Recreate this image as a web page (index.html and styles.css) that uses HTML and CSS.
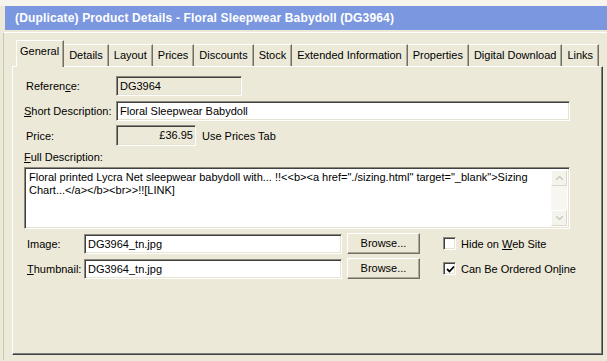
FILE: index.html
```html
<!DOCTYPE html>
<html>
<head>
<meta charset="utf-8">
<link rel="stylesheet" href="styles.css">
</head>
<body>
<div class="topstrip"></div>
<div class="titlebar"><span class="title">(Duplicate) Product Details - Floral Sleepwear Babydoll (DG3964)</span></div>
<div class="frame">
  <div class="tabs">
    <div class="tab sel">General</div>
    <div class="tab">Details</div>
    <div class="tab">Layout</div>
    <div class="tab">Prices</div>
    <div class="tab">Discounts</div>
    <div class="tab">Stock</div>
    <div class="tab">Extended Information</div>
    <div class="tab">Properties</div>
    <div class="tab">Digital Download</div>
    <div class="tab">Links</div>
  </div>
  <div class="panel">
    <div class="row r-ref">
      <div class="label lab-ref">Referen<u>c</u>e:</div>
      <div class="field disabled w-ref">DG3964</div>
    </div>
    <div class="row r-short">
      <div class="label lab-short"><u>S</u>hort Description:</div>
      <div class="field w-short">Floral Sleepwear Babydoll</div>
    </div>
    <div class="row r-price">
      <div class="label lab-ref">Price:</div>
      <div class="field disabled w-price num">£36.95</div>
      <div class="note">Use Prices Tab</div>
    </div>
    <div class="label lab-full"><u>F</u>ull Description:</div>
    <div class="memo">
      <div class="memo-text">Floral printed Lycra Net sleepwear babydoll with... !!&lt;&lt;b&gt;&lt;a href="./sizing.html" target="_blank"&gt;Sizing Chart...&lt;/a&gt;&lt;/b&gt;&lt;br&gt;&gt;!![LINK]</div>
      <div class="scroll">
        <div class="sbtn"><svg width="7" height="4" viewBox="0 0 7 4"><path d="M0 4 L3.5 0.5 L7 4" fill="none" stroke="#c9c7ba" stroke-width="1.3"/></svg></div>
        <div class="strack"></div>
        <div class="sbtn"><svg width="7" height="4" viewBox="0 0 7 4"><path d="M0 0 L3.5 3.5 L7 0" fill="none" stroke="#c9c7ba" stroke-width="1.3"/></svg></div>
      </div>
    </div>
    <div class="row r-img">
      <div class="label lab-img">Image:</div>
      <div class="field w-img">DG3964_tn.jpg</div>
      <div class="button">Browse...</div>
      <div class="check"><span class="box"></span><span>Hide on <u>W</u>eb Site</span></div>
    </div>
    <div class="row r-thumb">
      <div class="label lab-img"><u>T</u>humbnail:</div>
      <div class="field w-img">DG3964_tn.jpg</div>
      <div class="button">Browse...</div>
      <div class="check"><span class="box"><svg width="9" height="9" viewBox="0 0 9 9"><path d="M1 4 L3.5 6.5 L8 1.5" fill="none" stroke="#000" stroke-width="1.8"/></svg></span><span>Can Be Ordered On<u>l</u>ine</span></div>
    </div>
  </div>
</div>
</body>
</html>
```
FILE: styles.css
```css
html, body {
  margin: 0;
  padding: 0;
  background: #ECE9D8;
  font-family: "Liberation Sans", Arial, sans-serif;
  font-size: 11px;
  color: #000;
  overflow: hidden;
  width: 607px;
  height: 361px;
}
.topstrip {
  height: 6px;
  background: #f6f4ec;
}
.titlebar {
  margin-left: 5px;
  height: 24px;
  background: #7b97df;
  display: flex;
  align-items: center;
  padding-left: 10px;
}
.title {
  color: #fff;
  font-weight: bold;
  font-size: 12px;
  letter-spacing: 0.15px;
}
.frame {
  margin-top: 2px;
  margin-left: 3px;
  border-left: 1px solid #c9c6b6;
  border-top: 1px solid #fff;
  padding: 7px 3px 0 8px;
  height: 320px;
}
.tabs {
  display: flex;
  align-items: flex-end;
  height: 26px;
  padding-left: 4px;
  position: relative;
  z-index: 2;
}
.tab {
  height: 21px;
  line-height: 20px;
  padding: 0 5px 0 5px;
  border-top: 1px solid #fff;
  border-right: 1px solid #716f64;
  box-shadow: inset -1px 0 #aca899;
  white-space: nowrap;
}
.tab.sel {
  height: 26px;
  line-height: 20px;
  margin-bottom: -1px;
  background: #ECE9D8;
  border-left: 1px solid #fff;
  padding: 0 4px 0 3px;
}
.panel {
  border: 1px solid;
  border-color: #fff #404040 #404040 #fff;
  box-shadow: inset -1px -1px #808080;
  width: 591px;
  height: 289px;
  padding: 9px 0 0 11px;
  box-sizing: border-box;
}
.row {
  display: flex;
  align-items: center;
}
.label {
  white-space: nowrap;
}
.lab-ref { width: 90px; padding-left: 2px; }
.lab-short { width: 92px; }
.lab-img { width: 57px; padding-left: 3px; }
.lab-full { margin-top: 4px; height: 15px; line-height: 14px; }
.field {
  height: 20px;
  box-sizing: border-box;
  border: 1px solid;
  border-color: #8c8a7d #fff #fff #8c8a7d;
  box-shadow: inset 1px 1px #404040, inset -1px -1px #e6e3d3;
  background: #fff;
  padding: 0 2px 0 3px;
  line-height: 18px;
  font-size: 11px;
  white-space: nowrap;
}
.field.disabled {
  background: #ECE9D8;
}
.w-ref { width: 126px; }
.w-short { width: 454px; }
.w-price { width: 80px; height: 21px; }
.num { text-align: right; }
.note { margin-left: 6px; font-size: 11px; }
.r-short { margin-top: 5px; }
.r-price { margin-top: 4px; }
.memo {
  margin-top: 2px;
  width: 546px;
  height: 62px;
  box-sizing: border-box;
  border: 1px solid;
  border-color: #8c8a7d #fff #fff #8c8a7d;
  box-shadow: inset 1px 1px #404040, inset -1px -1px #e6e3d3;
  background: #fff;
  display: flex;
  padding: 2px 2px 2px 2px;
}
.memo-text {
  flex: 1;
  font-size: 11px;
  line-height: 13px;
  padding: 1px 2px;
}
.scroll {
  width: 16px;
  display: flex;
  flex-direction: column;
  background: #f7f6f0;
}
.sbtn {
  height: 16px;
  box-sizing: border-box;
  border: 1px solid;
  border-color: #fff #dcd9ca #dcd9ca #fff;
  background: #f4f3ec;
  display: flex;
  align-items: center;
  justify-content: center;
}
.strack { flex: 1; }
.r-img { margin-top: 4px; }
.r-thumb { margin-top: 4px; }
.w-img { width: 258px; }
.button {
  margin-left: 5px;
  width: 73px;
  height: 21px;
  box-sizing: border-box;
  border: 1px solid;
  border-color: #fff #716f64 #716f64 #fff;
  box-shadow: inset -1px -1px #aca899;
  text-align: center;
  line-height: 18px;
  font-size: 11px;
}
.check {
  margin-left: 23px;
  display: flex;
  align-items: center;
  font-size: 11px;
  white-space: nowrap;
}
.box {
  width: 13px;
  height: 13px;
  box-sizing: border-box;
  border: 1px solid;
  border-color: #8c8a7d #fff #fff #8c8a7d;
  box-shadow: inset 1px 1px #404040, inset -1px -1px #e6e3d3;
  background: #fff;
  margin-right: 5px;
  display: flex;
  align-items: center;
  justify-content: center;
}
.box svg { margin-left: 1px; margin-top: 1px; }
```
